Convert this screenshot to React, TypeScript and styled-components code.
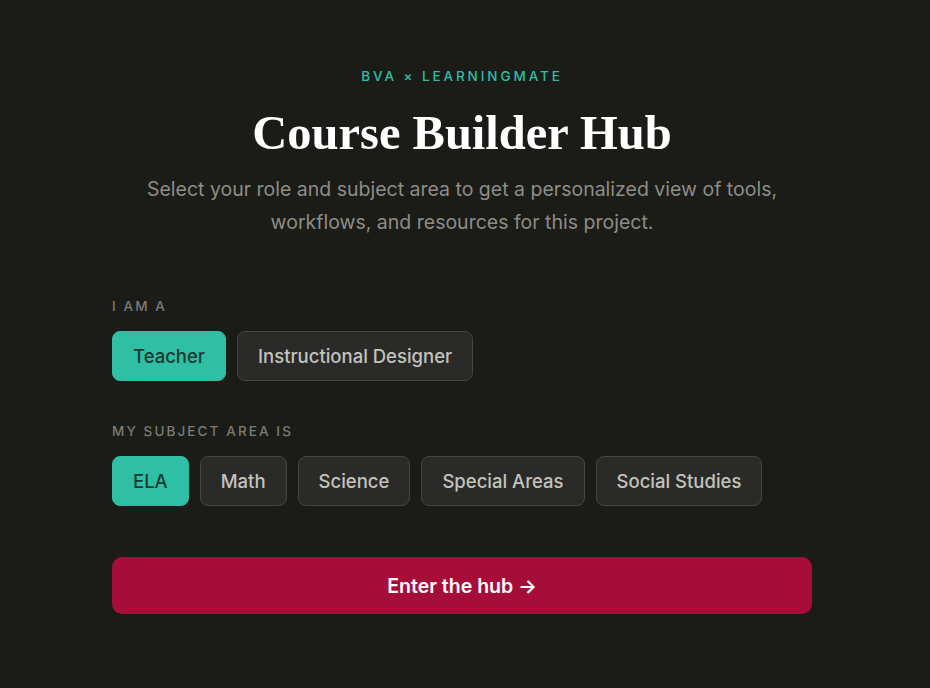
import { useState } from 'react';
import styled, { createGlobalStyle } from 'styled-components';

const GlobalStyle = createGlobalStyle`
    html, body {
        margin: 0;
        padding: 0;
        background: #1b1b18;
    }

    body {
        font-family: Inter, "Noto Sans", sans-serif;
        -webkit-font-smoothing: antialiased;
    }
`;

const roles = ['Teacher', 'Instructional Designer'];
const subjects = ['ELA', 'Math', 'Science', 'Special Areas', 'Social Studies'];

export default function App() {
    const [role, setRole] = useState('Teacher');
    const [subject, setSubject] = useState('ELA');

    return (
        <Page>
            <GlobalStyle />
            <Container>
                <Header>
                    <Eyebrow>BVA × LEARNINGMATE</Eyebrow>
                    <Title>Course Builder Hub</Title>
                    <Subtitle>
                        Select your role and subject area to get a personalized view of tools,
                        workflows, and resources for this project.
                    </Subtitle>
                </Header>

                <Group>
                    <Label>I am a</Label>
                    <Chips>
                        {roles.map(r => (
                            <Chip key={r} $active={r === role} onClick={() => setRole(r)}>{r}</Chip>
                        ))}
                    </Chips>
                </Group>

                <Group>
                    <Label>My subject area is</Label>
                    <Chips>
                        {subjects.map(s => (
                            <Chip key={s} $active={s === subject} onClick={() => setSubject(s)}>{s}</Chip>
                        ))}
                    </Chips>
                </Group>

                <EnterButton>Enter the hub →</EnterButton>
            </Container>
        </Page>
    );
}

const Page = styled.div`
    min-height: 688px;
    padding: 67px 6px 0 0;
    box-sizing: border-box;
`;

const Container = styled.div`
    width: 700px;
    margin: 0 auto;
    display: flex;
    flex-direction: column;
`;

const Header = styled.header`
    display: flex;
    flex-direction: column;
    align-items: center;
    text-align: center;
    margin-bottom: 58px;
`;

const Eyebrow = styled.div`
    color: #2ebfa5;
    font-size: 13.5px;
    font-weight: 500;
    letter-spacing: 2.9px;
    line-height: 18px;
`;

const Title = styled.h1`
    margin: 20px 0 0;
    font-family: "Liberation Serif", "DejaVu Serif", serif;
    font-weight: 700;
    font-size: 48.5px;
    line-height: 56px;
    color: #ffffff;
`;

const Subtitle = styled.p`
    margin: 12px 0 0;
    max-width: 700px;
    font-size: 19.5px;
    line-height: 33px;
    color: #8d8d88;
`;

const Group = styled.section`
    display: flex;
    flex-direction: column;
    gap: 16px;
    margin-bottom: 41px;
`;

const Label = styled.div`
    font-size: 13.5px;
    font-weight: 500;
    letter-spacing: 2.1px;
    text-transform: uppercase;
    color: #7b7b76;
    line-height: 18px;
`;

const Chips = styled.div`
    display: flex;
    flex-wrap: wrap;
    gap: 11px;
`;

const Chip = styled.button<{ $active?: boolean }>`
    height: 50px;
    padding: 0 20px;
    border-radius: 8px;
    font-family: inherit;
    font-size: 18.5px;
    font-weight: 500;
    cursor: pointer;
    border: 1px solid ${p => (p.$active ? '#2ebfa5' : '#454542')};
    background: ${p => (p.$active ? '#2ebfa5' : '#2a2a28')};
    color: ${p => (p.$active ? '#173a33' : '#c3c3be')};
`;

const EnterButton = styled.button`
    margin-top: 10px;
    height: 57px;
    width: 100%;
    border: none;
    border-radius: 10px;
    background: #a60e39;
    color: #ffffff;
    font-family: inherit;
    font-size: 19.5px;
    font-weight: 600;
    cursor: pointer;
`;
